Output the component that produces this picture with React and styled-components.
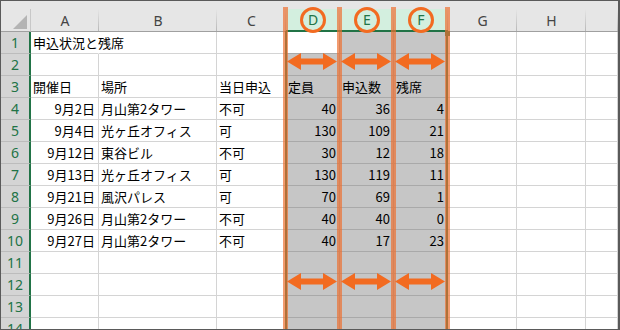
import React from "react";
import styled, { createGlobalStyle } from "styled-components";

const GlobalStyle = createGlobalStyle`
  html, body { margin: 0; padding: 0; background: #fff; }
  body { font-family: "Noto Sans CJK JP", "Noto Sans", sans-serif; }
`;

const letters = ["A", "B", "C", "D", "E", "F", "G", "H", ""];
const SEL = [3, 4, 5];

// data rows, 6 filled columns (A-F)
const data = [
  ["申込状況と残席", "", "", "", "", ""],
  ["", "", "", "", "", ""],
  ["開催日", "場所", "当日申込", "定員", "申込数", "残席"],
  ["9月2日", "月山第2タワー", "不可", 40, 36, 4],
  ["9月4日", "光ヶ丘オフィス", "可", 130, 109, 21],
  ["9月12日", "東谷ビル", "不可", 30, 12, 18],
  ["9月13日", "光ヶ丘オフィス", "可", 130, 119, 11],
  ["9月21日", "風沢パレス", "可", 70, 69, 1],
  ["9月26日", "月山第2タワー", "不可", 40, 40, 0],
  ["9月27日", "月山第2タワー", "不可", 40, 17, 23],
  ["", "", "", "", "", ""],
  ["", "", "", "", "", ""],
  ["", "", "", "", "", ""],
  ["", "", "", "", "", ""],
];

const isRight = (v, r, c) => typeof v === "number" || (c === 0 && r >= 3 && v !== "");

function App() {
  return (
    <>
      <GlobalStyle />
      <Frame>
        <Strip />
        <Sheet>
          <Corner>
            <svg width="14" height="14" viewBox="0 0 14 14">
              <polygon points="14,0 14,14 0,14" fill="#b4b4b4" />
            </svg>
          </Corner>
          {letters.map((l, i) => (
            <ColHead key={l + i} $sel={SEL.includes(i)}>{l}</ColHead>
          ))}
          {data.map((row, r) => (
            <React.Fragment key={r}>
              <RowHead>{r + 1}</RowHead>
              {letters.map((_, c) => {
                const v = c < 6 ? row[c] : "";
                const sel = SEL.includes(c);
                return (
                  <Cell
                    key={c}
                    $sel={sel}
                    $active={sel && r === 0 && c === 3}
                    $right={isRight(v, r, c)}
                    $spill={r === 0 && c === 0}
                  >
                    {v}
                  </Cell>
                );
              })}
            </React.Fragment>
          ))}
        </Sheet>
        <Overlay>
          <SelFrame />
          <FillHandle />
          {[282, 336, 390, 444].map((x) => (
            <Guide key={x} $x={x} />
          ))}
          {[299, 353, 407].map((x) => (
            <Ring key={x} $x={x} />
          ))}
          {[52, 272].map((y) =>
            [286, 340, 394].map((x) => (
              <Arrow key={x + "-" + y} $x={x} $y={y} width="50" height="17" viewBox="0 0 50 17">
                <polygon
                  points="0,8.5 14,0 14,5.5 36,5.5 36,0 50,8.5 36,17 36,11.5 14,11.5 14,17"
                  fill="#f26b21"
                />
              </Arrow>
            ))
          )}
        </Overlay>
      </Frame>
    </>
  );
}

export default App;

const Frame = styled.div`
  position: relative;
  width: 620px;
  height: 330px;
  box-sizing: border-box;
  border: 1px solid #5a5a5a;
  border-right-width: 2px;
  overflow: hidden;
  background: #fff;
`;

const Strip = styled.div`
  height: 8px;
  background: #e6e6e6;
`;

const Sheet = styled.div`
  display: grid;
  grid-template-columns: 30px 68px 118px 69px 54px 54px 54px 69px 69px 1fr;
  grid-template-rows: 23px;
  grid-auto-rows: 22px;
`;

const Corner = styled.div`
  display: flex;
  align-items: flex-end;
  justify-content: flex-end;
  padding: 0 3px 2px 0;
  background: #e6e6e6;
  border-right: 1px solid #c8c8c8;
  border-bottom: 1px solid #a0a0a0;
`;

const ColHead = styled.div`
  position: relative;
  display: flex;
  align-items: center;
  justify-content: center;
  background: ${(p) => (p.$sel ? "#d3efdf" : "#e6e6e6")};
  color: ${(p) => (p.$sel ? "#217346" : "#444")};
  border-bottom: ${(p) => (p.$sel ? "2px solid #217346" : "1px solid #a0a0a0")};
  font: 14px "Noto Sans", sans-serif;
  &::after {
    content: "";
    position: absolute;
    right: 0;
    top: 0;
    bottom: 0;
    width: 1px;
    background: linear-gradient(#e6e6e6, #b8b8b8);
  }
`;

const RowHead = styled.div`
  display: flex;
  align-items: center;
  justify-content: center;
  background: #d4d4d4;
  color: #217346;
  border-right: 2px solid #217346;
  border-bottom: 1px solid #bcbcbc;
  font: 14px "Noto Sans", sans-serif;
`;

const Cell = styled.div`
  display: flex;
  align-items: center;
  justify-content: ${(p) => (p.$right ? "flex-end" : "flex-start")};
  padding: ${(p) => (p.$right ? "0 3px 0 0" : "0 0 0 2px")};
  border-right: 1px solid ${(p) => (p.$spill ? "transparent" : p.$sel ? "#a9a9a9" : "#d4d4d4")};
  border-bottom: 1px solid ${(p) => (p.$sel ? "#a9a9a9" : "#d4d4d4")};
  background: ${(p) => (p.$sel && !p.$active ? "#c6c6c6" : "#fff")};
  font-size: 13px;
  color: #000;
  white-space: nowrap;
  overflow: ${(p) => (p.$spill ? "visible" : "hidden")};
  position: relative;
  z-index: ${(p) => (p.$spill ? 1 : 0)};
`;

const Overlay = styled.div`
  position: absolute;
  inset: 0;
  pointer-events: none;
  z-index: 2;
`;

const SelFrame = styled.div`
  position: absolute;
  left: 284px;
  top: 30px;
  bottom: 0;
  width: 163px;
  box-sizing: border-box;
  border-left: 2px solid #217346;
  border-right: 2px solid #217346;
`;

const FillHandle = styled.div`
  position: absolute;
  left: 444px;
  top: 30px;
  width: 5px;
  height: 5px;
  background: #217346;
`;

const Guide = styled.div`
  position: absolute;
  top: 6px;
  bottom: 0;
  left: ${(p) => p.$x}px;
  width: 5px;
  background: rgba(236, 112, 50, 0.7);
`;

const Ring = styled.div`
  position: absolute;
  left: ${(p) => p.$x}px;
  top: 6px;
  width: 26px;
  height: 26px;
  box-sizing: border-box;
  border: 3.5px solid #f26b21;
  border-radius: 50%;
`;

const Arrow = styled.svg`
  position: absolute;
  left: ${(p) => p.$x}px;
  top: ${(p) => p.$y}px;
`;
